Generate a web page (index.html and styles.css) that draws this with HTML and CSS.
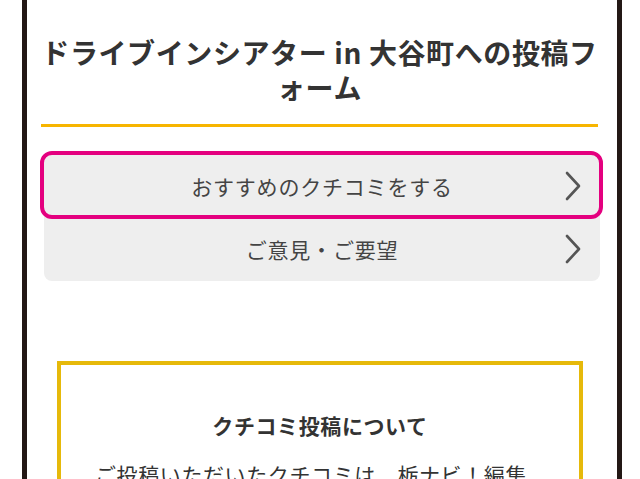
FILE: index.html
```html
<!DOCTYPE html>
<html lang="ja">
<head>
<meta charset="utf-8">
<title>投稿フォーム</title>
<link rel="stylesheet" href="styles.css">
</head>
<body>
<div class="frame">
  <div class="content">
    <h1 class="title">ドライブインシアター in 大谷町への投稿フォーム</h1>
    <div class="menu">
      <a class="item item-first" href="#">
        <span class="label">おすすめのクチコミをする</span>
        <svg class="chev" width="16" height="30" viewBox="0 0 16 30"><path d="M2 2 L14 15 L2 28" fill="none" stroke="#555" stroke-width="2.6" stroke-linecap="round" stroke-linejoin="round"/></svg>
        <span class="highlight"></span>
      </a>
      <a class="item item-last" href="#">
        <span class="label">ご意見・ご要望</span>
        <svg class="chev" width="16" height="30" viewBox="0 0 16 30"><path d="M2 2 L14 15 L2 28" fill="none" stroke="#555" stroke-width="2.6" stroke-linecap="round" stroke-linejoin="round"/></svg>
      </a>
    </div>
    <div class="info">
      <h2 class="info-title">クチコミ投稿について</h2>
      <p class="info-text">ご投稿いただいたクチコミは、栃ナビ！編集部で確認後、掲載させていただきます。</p>
    </div>
  </div>
</div>
</body>
</html>
```

FILE: styles.css
```css
html, body {
  margin: 0;
  padding: 0;
  background: #fff;
}

body {
  font-family: "Noto Sans CJK JP", "Noto Sans", sans-serif;
  color: #333;
}

.frame {
  margin-left: 22px;
  width: 590px;
  height: 479px;
  border-left: 5px solid #231815;
  border-right: 5px solid #231815;
  overflow: hidden;
}

.content {
  padding: 35px 17px 0;
}

.title {
  margin: 0 2px 0 -3px;
  padding-bottom: 19px;
  border-bottom: 3px solid #f7b500;
  font-size: 28px;
  line-height: 35px;
  font-weight: 700;
  letter-spacing: 0.6px;
  text-align: center;
  color: #333;
}

.menu {
  margin-top: 28px;
  background: #eeeeee;
  border-radius: 8px;
}

.item {
  position: relative;
  display: flex;
  align-items: center;
  justify-content: center;
  height: 63px;
  text-decoration: none;
  color: #444;
}

.label {
  font-size: 21px;
  line-height: 1;
  letter-spacing: 0.8px;
}

.chev {
  position: absolute;
  right: 19px;
  top: 50%;
  margin-top: -16px;
}

.highlight {
  position: absolute;
  top: -4px;
  left: -4px;
  right: -3px;
  bottom: -1px;
  border: 4px solid #e4007f;
  border-radius: 12px;
  pointer-events: none;
}

.info {
  margin: 80px 17px 0 13px;
  border: 4px solid #e6b90a;
  padding: 45px 34px 0;
}

.info-title {
  margin: 0;
  font-size: 21px;
  line-height: 30px;
  font-weight: 700;
  letter-spacing: 0.6px;
  text-align: center;
  color: #333;
}

.info-text {
  margin: 17px 0 0;
  font-size: 21px;
  line-height: 34px;
  letter-spacing: 0.6px;
  color: #333;
}
```
